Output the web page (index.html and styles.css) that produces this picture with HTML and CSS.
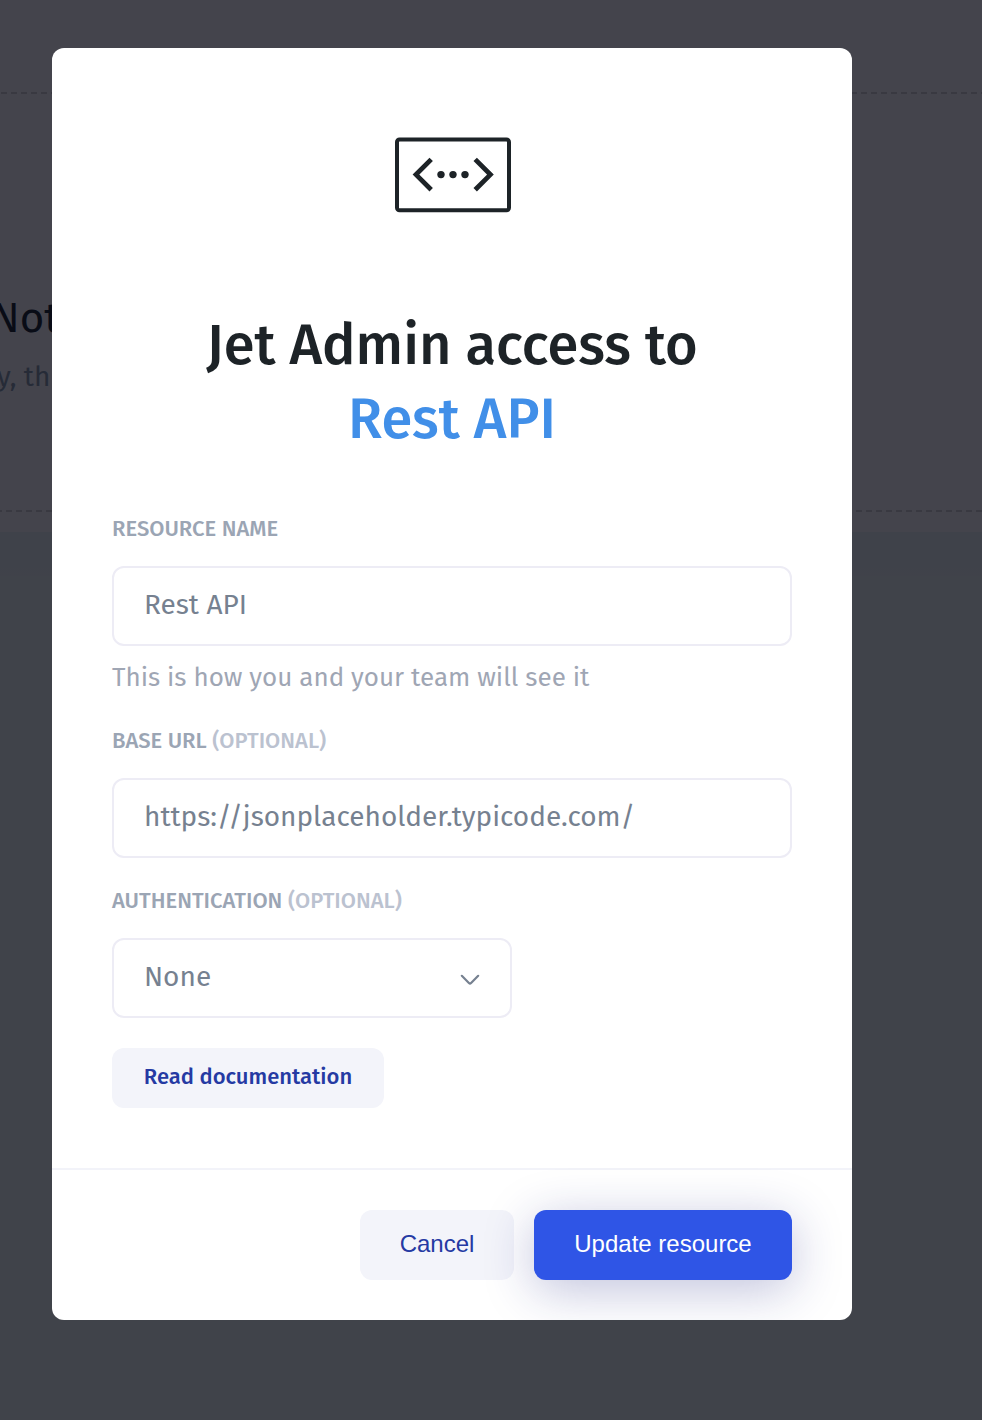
FILE: index.html
```
<!DOCTYPE html>
<html lang="en">
<head>
<meta charset="utf-8">
<title>Jet Admin access to Rest API</title>
<link rel="stylesheet" href="styles.css">
</head>
<body>
<div class="backdrop">
  <div class="panel">
    <div class="panel-title">Not</div>
    <div class="panel-text">y, th</div>
  </div>
</div>
<main class="modal">
  <div class="content">
    <svg class="logo" width="116" height="76" viewBox="0 0 116 76" fill="none" stroke="#1d2327">
      <rect x="2" y="2.4" width="112" height="70.8" rx="2.5" stroke-width="4"/>
      <path d="M36.2 22.4 21 37.6 36.2 52.8M80.2 22.4 95.4 37.6 80.2 52.8" stroke-width="4.8"/>
      <g fill="#1d2327" stroke="none"><circle cx="46" cy="37.6" r="3.7"/><circle cx="58" cy="37.6" r="3.7"/><circle cx="70" cy="37.6" r="3.7"/></g>
    </svg>
    <h1 class="title">Jet Admin access to<br><span class="accent">Rest API</span></h1>
    <div class="label">RESOURCE NAME</div>
    <div class="input">Rest API</div>
    <div class="help">This is how you and your team will see it</div>
    <div class="label">BASE URL <span class="optional">(OPTIONAL)</span></div>
    <div class="input">https://jsonplaceholder.typicode.com/</div>
    <div class="label label-auth">AUTHENTICATION <span class="optional">(OPTIONAL)</span></div>
    <div class="input select">None
      <svg width="20" height="12" viewBox="0 0 20 12" fill="none" stroke="#768190" stroke-width="2.2" stroke-linecap="round" stroke-linejoin="round"><path d="M1.8 1.8 8.9 9Q10 10 11.1 9L18.2 1.8"/></svg>
    </div>
    <a class="docs">Read documentation</a>
  </div>
  <footer class="footer">
    <button class="btn cancel">Cancel</button>
    <button class="btn update">Update resource</button>
  </footer>
</main>
</body>
</html>
```
FILE: styles.css
```
* { box-sizing: border-box; }
body {
  margin: 0;
  height: 1420px;
  overflow: hidden;
  background: #40434a;
  font-family: "Fira Sans", "Noto Sans", sans-serif;
}
.backdrop {
  position: absolute;
  inset: 0 0 auto 0;
  height: 576px;
  background: linear-gradient(#44444c 532px, #3f424a 532px, #3f424a 566px, #40424a 576px);
}
.panel {
  position: absolute;
  top: 92px;
  left: 0;
  width: 100%;
  height: 420px;
  padding-top: 196px;
  background:
    repeating-linear-gradient(90deg, #393941 0 6px, transparent 6px 10px) 1px 0 / 100% 2px no-repeat,
    repeating-linear-gradient(90deg, #393941 0 6px, transparent 6px 10px) -4px 100% / 110% 2px no-repeat;
}
.panel-title {
  margin-left: -9px;
  font-size: 42px;
  line-height: 60px;
  color: #090c16;
}
.panel-text {
  margin-left: -3px;
  font-size: 28px;
  line-height: 58px;
  color: #262b37;
}
.modal {
  position: relative;
  width: 800px;
  height: 1272px;
  margin: 48px 0 0 52px;
  border-radius: 12px;
  background: #fff;
  overflow: hidden;
}
.content {
  height: 1120px;
  padding: 89px 60px 0;
  display: flex;
  flex-direction: column;
}
.logo { margin: 0 0 0 283px; flex: none; }
.title {
  margin: 96px 0 0;
  text-align: center;
  font-size: 56px;
  line-height: 74px;
  font-weight: 500;
  color: #1d2327;
}
.accent { color: #418fe8; }
.label {
  margin-top: 55px;
  height: 34px;
  line-height: 34px;
  font-size: 22px;
  font-weight: 500;
  color: #9ba5b4;
}
.optional { color: #bbc2d0; }
.input {
  height: 80px;
  margin-top: 20px;
  padding: 0 30px;
  border: 2px solid #edecf5;
  border-radius: 12px;
  font-size: 28px;
  line-height: 74px;
  color: #768190;
}
.help {
  margin-top: 12px;
  line-height: 40px;
  font-size: 26px;
  color: #9fa6b4;
}
.help + .label { margin-top: 26px; }
.label-auth { margin-top: 26px; }
.select {
  width: 400px;
  display: flex;
  justify-content: space-between;
}
.select svg { margin-top: 34px; }
.docs {
  margin-top: 30px;
  width: 272px;
  height: 60px;
  border-radius: 12px;
  background: #f3f4fa;
  text-align: center;
  line-height: 57px;
  font-size: 22px;
  font-weight: 500;
  color: #253aa3;
}
.footer {
  height: 152px;
  padding: 40px 60px 0;
  border-top: 2px solid #f2f3f9;
  display: flex;
  justify-content: flex-end;
  gap: 20px;
}
.btn {
  height: 70px;
  padding: 0 0 2px;
  border: 0;
  border-radius: 12px;
  font-family: "Liberation Sans", Arial, sans-serif;
  font-size: 24px;
}
.cancel { width: 154px; background: #f3f4fa; color: #253aa3; }
.update {
  width: 258px;
  background: #2f55e6;
  color: #fff;
  box-shadow: 0 10px 50px rgba(30, 35, 130, 0.28);
}
```
